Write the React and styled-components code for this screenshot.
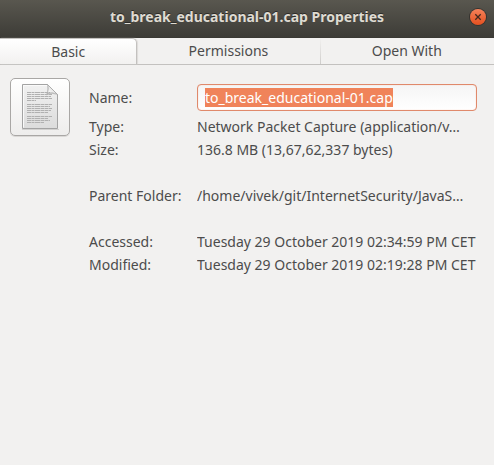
import React, { useEffect, useRef } from "react";
import styled, { createGlobalStyle } from "styled-components";

const GlobalStyle = createGlobalStyle`
  *, *::before, *::after { box-sizing: border-box; }
  body {
    margin: 0;
    background: #f2f1f0;
    color: #4c4c4c;
    font-family: "Noto Sans", "Open Sans", sans-serif;
    font-size: 14px;
    line-height: 20px;
  }
`;

const Dialog = styled.main`
  display: flex;
  flex-direction: column;
  min-height: 100vh;
  background: #f2f1f0;
`;

const TitleBar = styled.header`
  display: grid;
  grid-template-columns: 32px 1fr 32px;
  align-items: center;
  height: 38px;
  padding-bottom: 3px;
  background: linear-gradient(#59574f, #3d3c37);
  border-bottom: 1px solid #3a3934;
`;

const Title = styled.h1`
  grid-column: 2;
  margin: 0;
  overflow: hidden;
  color: #dfdbd2;
  font-size: 14px;
  font-weight: 700;
  line-height: 20px;
  text-align: center;
  text-overflow: ellipsis;
  text-shadow: 0 -1px #2c2b28;
  white-space: nowrap;
`;

const CloseButton = styled.button`
  display: flex;
  align-items: center;
  justify-content: center;
  width: 16px;
  height: 16px;
  margin-left: 8px;
  padding: 0;
  border: 0;
  border-radius: 50%;
  background: linear-gradient(#f5825a, #e4501f);
  box-shadow: 0 0 0 1px #35332f;
`;

const Tabs = styled.div`
  display: flex;
  height: 27px;
  border-bottom: 1px solid #c3c1bf;
`;

const Tab = styled.button`
  flex: 1 1 auto;
  padding: 0;
  border: 0;
  border-right: 1px solid transparent;
  border-image: ${(p) =>
    p.$divided ? "linear-gradient(#f2f1f0, #cfcdcb) 0 1 0 0" : "none"};
  background: transparent;
  color: #4c4c4c;
  font: inherit;

  &[aria-selected="true"] {
    border-top: 1px solid #c3c1bf;
    border-right-color: #c3c1bf;
    border-radius: 0 5px 0 0;
    background: linear-gradient(#ffffff, #f2f1f0);
    box-shadow: 1px 0 1px #dddbd9;
  }
`;

const Panel = styled.section`
  display: flex;
  align-items: flex-start;
  gap: 19px;
  padding: 13px 17px 12px 10px;
`;

const IconButton = styled.button`
  display: flex;
  flex: none;
  align-items: center;
  justify-content: center;
  width: 60px;
  height: 58px;
  padding: 0;
  border: 1px solid #a9a7a5;
  border-radius: 5px;
  background: linear-gradient(#ffffff, #eeedec);
  box-shadow: 0 1px #dad8d6;
`;

const Fields = styled.div`
  display: grid;
  flex: 1;
  grid-template-columns: 96px minmax(0, 1fr);
  column-gap: 12px;
  padding-top: 6px;
`;

const FieldRow = styled.div`
  display: grid;
  grid-column: 1 / -1;
  grid-template-columns: subgrid;
  align-items: center;
  min-height: 23px;
  margin-bottom: ${(p) => (p.$spaced ? "23px" : "0")};
`;

const Label = styled.label`
  white-space: nowrap;
`;

const Value = styled.output`
  overflow: hidden;
  text-overflow: ellipsis;
  white-space: nowrap;
`;

const NameInput = styled.input`
  width: 100%;
  height: 27px;
  margin-bottom: 4px;
  padding: 0 7px;
  border: 1px solid #e0896b;
  border-radius: 4px;
  outline: 0;
  background: linear-gradient(#f5f5f5, #ffffff);
  box-shadow: inset 0 0 1px #f2a98f;
  color: #4c4c4c;
  font: inherit;

  &::selection {
    background: #f0835a;
    color: #ffffff;
  }
`;

const NameLabel = styled(Label)`
  padding-bottom: 4px;
`;

const TEXT_LINES = [
  [8, 29], [10, 31], [12, 30], [14, 31], [16, 15],
  [20, 31], [22, 29], [24, 31], [26, 30], [28, 27],
  [32, 31], [34, 27], [36, 29], [38, 23],
];

function DocumentIcon() {
  return (
    <svg width="38" height="48" viewBox="0 0 38 48" fill="none" aria-hidden="true">
      <defs>
        <linearGradient id="paper" x1="0" y1="0" x2="0" y2="1">
          <stop offset="0" stopColor="#f1f1f1" />
          <stop offset="1" stopColor="#dcdcdc" />
        </linearGradient>
        <linearGradient id="fold" x1="0" y1="1" x2="1" y2="0">
          <stop offset="0" stopColor="#ffffff" />
          <stop offset="0.5" stopColor="#e8e8e8" />
          <stop offset="1" stopColor="#aaaaaa" />
        </linearGradient>
      </defs>
      <path d="M1 46.500h37" stroke="#d2d1d0" />
      <path d="M1.500 1.500h25l10 10v34h-35z" fill="url(#paper)" stroke="#a3a3a3" />
      <path d="M2.500 44.500v-42h24" stroke="#fafafa" />
      <path d="M26 2.500c1 4 0 6-1 10 4-2 8-2 11 0z" fill="#bcbcbc" opacity="0.6" />
      <path d="M26.500 1.500c1 3 1 6-.5 9 3-1 7-1 10.500 1z" fill="url(#fold)" stroke="#a3a3a3" strokeWidth="0.700" />
      {TEXT_LINES.map(([y, end]) => (
        <path
          key={y}
          d={`M6 ${y + 1.5}H${end}`}
          stroke="#b0b0b0"
          strokeDasharray="4 0.500 3 0.500 5 0.500"
        />
      ))}
    </svg>
  );
}

function CloseIcon() {
  return (
    <svg width="8" height="8" viewBox="0 0 8 8" aria-hidden="true">
      <path d="M1.300 1.300l5.400 5.400M6.700 1.300l-5.400 5.400" stroke="#44291e" strokeWidth="1.300" />
    </svg>
  );
}

const DETAILS = [
  { id: "type", label: "Type:", value: "Network Packet Capture (application/v…" },
  { id: "size", label: "Size:", value: "136.8 MB (13,67,62,337 bytes)", spaced: true },
  { id: "parent", label: "Parent Folder:", value: "/home/vivek/git/InternetSecurity/JavaS…", spaced: true },
  { id: "accessed", label: "Accessed:", value: "Tuesday 29 October 2019 02:34:59 PM CET" },
  { id: "modified", label: "Modified:", value: "Tuesday 29 October 2019 02:19:28 PM CET" },
];

export default function App() {
  const nameRef = useRef(null);

  useEffect(() => {
    nameRef.current.focus();
    nameRef.current.select();
  }, []);

  return (
    <Dialog>
      <GlobalStyle />
      <TitleBar>
        <Title>to_break_educational-01.cap Properties</Title>
        <CloseButton type="button" aria-label="Close">
          <CloseIcon />
        </CloseButton>
      </TitleBar>
      <Tabs role="tablist">
        <Tab type="button" role="tab" aria-selected="true">Basic</Tab>
        <Tab type="button" role="tab" aria-selected="false" $divided>Permissions</Tab>
        <Tab type="button" role="tab" aria-selected="false">Open With</Tab>
      </Tabs>
      <Panel role="tabpanel">
        <IconButton type="button" aria-label="Choose icon">
          <DocumentIcon />
        </IconButton>
        <Fields>
          <FieldRow>
            <NameLabel htmlFor="name">Name:</NameLabel>
            <NameInput id="name" ref={nameRef} type="text" defaultValue="to_break_educational-01.cap" />
          </FieldRow>
          {DETAILS.map((d) => (
            <FieldRow key={d.id} $spaced={d.spaced}>
              <Label htmlFor={d.id}>{d.label}</Label>
              <Value id={d.id}>{d.value}</Value>
            </FieldRow>
          ))}
        </Fields>
      </Panel>
    </Dialog>
  );
}
